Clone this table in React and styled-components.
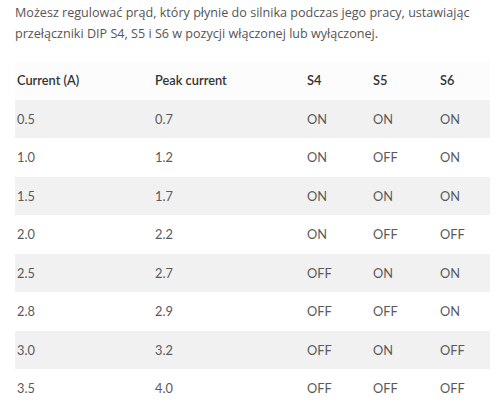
import React from 'react';
import styled, { createGlobalStyle } from 'styled-components';

const GlobalStyle = createGlobalStyle`
  body {
    margin: 0;
    background: #ffffff;
  }
`;

const Page = styled.div`
  width: 500px;
  height: 408px;
  overflow: hidden;
  padding: 2px 10px 0 15px;
  box-sizing: border-box;
`;

const Intro = styled.p`
  margin: 0;
  font-family: 'Open Sans', sans-serif;
  font-size: 12.6px;
  line-height: 21px;
  color: #555555;
`;

const Table = styled.div`
  margin-top: 17px;
  width: 475px;
  font-family: Lato, 'Open Sans', sans-serif;
  font-size: 12.8px;
`;

const Row = styled.div`
  display: grid;
  grid-template-columns: 138px 152px 66px 67px 52px;
  height: 38.5px;
  align-items: center;
  background: ${(p) => (p.$head ? '#fcfcfc' : p.$shade ? '#f1f1f1' : '#ffffff')};
  color: ${(p) => (p.$head ? '#333333' : '#5a5a5a')};
  font-weight: ${(p) => (p.$head ? 600 : 400)};
`;

const Cell = styled.div`
  padding-left: 2px;
`;

const rows = [
  ['0.5', '0.7', 'ON', 'ON', 'ON'],
  ['1.0', '1.2', 'ON', 'OFF', 'ON'],
  ['1.5', '1.7', 'ON', 'ON', 'ON'],
  ['2.0', '2.2', 'ON', 'OFF', 'OFF'],
  ['2.5', '2.7', 'OFF', 'ON', 'ON'],
  ['2.8', '2.9', 'OFF', 'OFF', 'ON'],
  ['3.0', '3.2', 'OFF', 'ON', 'OFF'],
  ['3.5', '4.0', 'OFF', 'OFF', 'OFF'],
];

export default function App() {
  return (
    <Page>
      <GlobalStyle />
      <Intro>
        Możesz regulować prąd, który płynie do silnika podczas jego pracy, ustawiając
        <br />
        przełączniki DIP S4, S5 i S6 w pozycji włączonej lub wyłączonej.
      </Intro>
      <Table>
        <Row $head>
          <Cell>Current (A)</Cell>
          <Cell>Peak current</Cell>
          <Cell>S4</Cell>
          <Cell>S5</Cell>
          <Cell>S6</Cell>
        </Row>
        {rows.map((r, i) => (
          <Row key={i} $shade={i % 2 === 0}>
            {r.map((c, j) => (
              <Cell key={j}>{c}</Cell>
            ))}
          </Row>
        ))}
      </Table>
    </Page>
  );
}
